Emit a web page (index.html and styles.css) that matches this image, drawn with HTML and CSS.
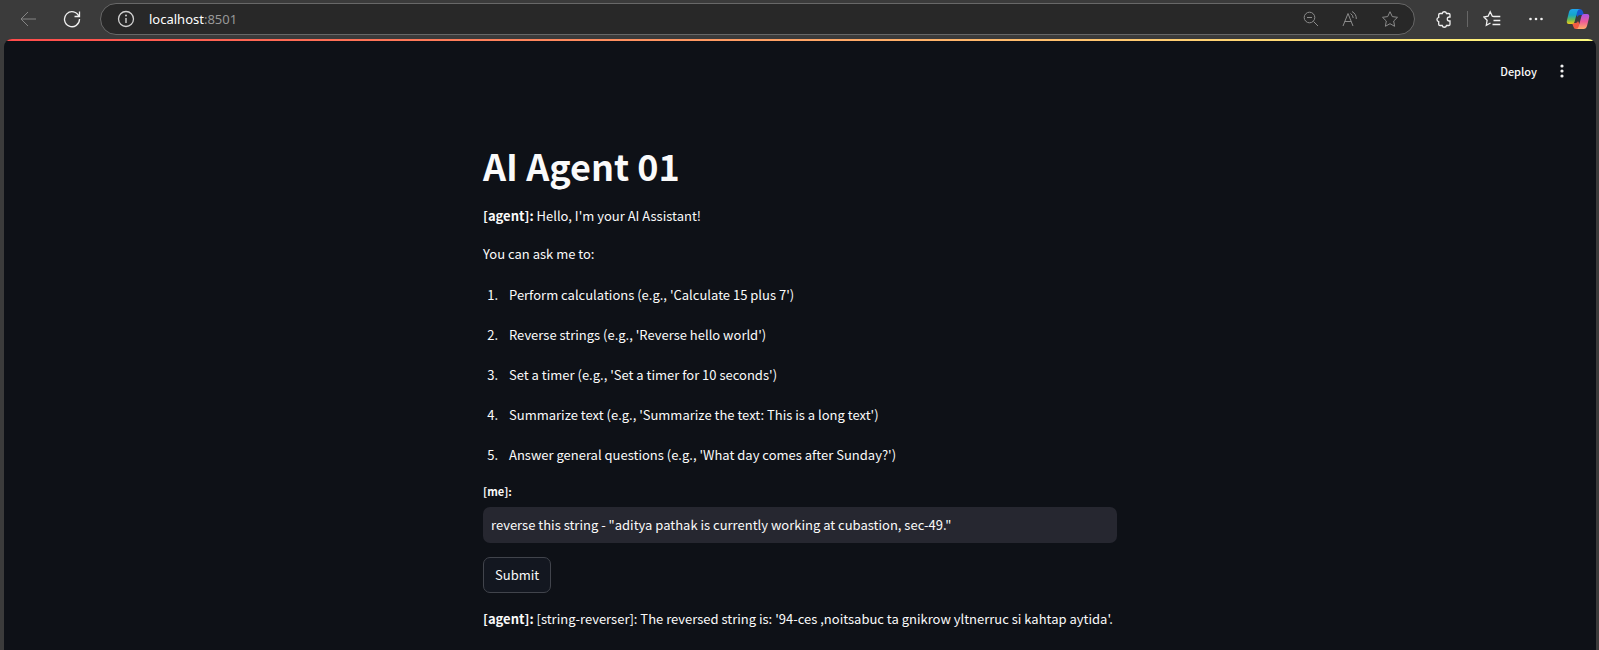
FILE: index.html
```html
<!DOCTYPE html>
<html lang="en">
<head>
<meta charset="utf-8">
<title>AI Agent 01</title>
<link rel="stylesheet" href="styles.css">
</head>
<body>
<header class="toolbar">
  <button class="tool back" aria-label="Back"><svg width="18" height="18" viewBox="0 0 18 18"><path d="M17 9H2M9 2L2 9l7 7"/></svg></button>
  <button class="tool" aria-label="Refresh"><svg width="18" height="18" viewBox="0 0 18 18"><path d="M16 6.500A7.500 7.500 0 1 0 16.500 9M16.500 1.500v5h-5" stroke-width="1.300"/></svg></button>
  <div class="address">
    <button class="tool" aria-label="Site information"><svg width="18" height="18" viewBox="0 0 18 18"><circle cx="9" cy="9" r="7.500" stroke-width="1.300"/><path d="M9 8v5" stroke-width="1.400"/><circle class="dot" cx="9" cy="5.500" r="1"/></svg></button>
    <div class="url">localhost<span class="port">:8501</span></div>
    <div class="address-actions">
      <button class="tool" aria-label="Zoom out"><svg width="16" height="16" viewBox="0 0 16 16"><circle cx="6.500" cy="6.500" r="5.300"/><path d="M10.500 10.500L15 15M4 6.500h5"/></svg></button>
      <button class="tool" aria-label="Read aloud"><svg width="18" height="16" viewBox="0 0 18 16"><path d="M2 15L7 2.500L12 15M3.700 10.500h6.600M9.500 2.500Q12 4 12.200 7M11 .5Q15.500 3 15.300 8"/></svg></button>
      <button class="tool" aria-label="Add to favorites"><svg width="18" height="18" viewBox="0 0 18 18"><path d="M9 1.700l2.300 4.900 5.200.7-3.800 3.700.9 5.300L9 13.700l-4.600 2.600.9-5.300-3.800-3.700 5.200-.7z"/></svg></button>
    </div>
  </div>
  <div class="browser-actions">
    <button class="tool" aria-label="Extensions"><svg width="18" height="18" viewBox="0 0 18 18"><path d="M5 3.500h2.200a2.200 2.200 0 0 1 4.300 0h2.200q1.300 0 1.300 1.300V7h-.7a2 2 0 0 0 0 4h.7v3.200q0 1.300-1.300 1.300h-2.200a2.200 2.200 0 0 1-4.300 0H5q-1.300 0-1.300-1.300v-2.500a2.200 2.200 0 0 1 0-4.300V4.800Q3.700 3.500 5 3.500z" stroke-width="1.300"/></svg></button>
    <span class="divider"></span>
    <button class="tool" aria-label="Favorites"><svg width="18" height="18" viewBox="0 0 18 18"><path d="M11 6.500L9.300 6.200 7.200 1.700 5.100 6.200.9 7l3.200 3.300-.8 5 4.200-2.300M10.500 6.500h6.800M10.500 10.500h6.800M9.500 14.500h7.800" stroke-width="1.300"/></svg></button>
    <button class="tool more" aria-label="Settings and more"><svg width="16" height="16" viewBox="0 0 16 16"><g class="dot"><circle cx="2.500" cy="8" r="1.300"/><circle cx="8" cy="8" r="1.300"/><circle cx="13.500" cy="8" r="1.300"/></g></svg></button>
    <button class="tool" aria-label="Copilot"><svg width="24" height="22" viewBox="0 0 24 22">
      <defs>
        <linearGradient id="cool" x1="0" y1="0" x2="0" y2="1"><stop offset="0" stop-color="#20a5ee"/><stop offset=".4" stop-color="#15a5c9"/><stop offset=".7" stop-color="#65ba58"/><stop offset="1" stop-color="#f3cb16"/></linearGradient>
        <linearGradient id="warm" x1="0" y1="0" x2="0" y2="1"><stop offset="0" stop-color="#a855ed"/><stop offset=".5" stop-color="#ed5b99"/><stop offset="1" stop-color="#ffad68"/></linearGradient>
      </defs>
      <path fill="#1857ce" stroke="none" d="M10 1h4q2.200 0 2.900 2.500L18 7h-4q-2 0-2.500 2L9 5z"/>
      <path fill="#f05c42" stroke="none" d="M6 15h3.500q2 0 2.500-2l2 4-1 4h-3q-2 0-2.700-2.500z"/>
      <path fill="url(#cool)" stroke="none" d="M6.500 1H14q-2 0-2.700 2.500L8.500 14q-.6 2-2.500 2H3q-3 0-2-4l2-8q.8-3 3.500-3z"/>
      <path fill="url(#warm)" stroke="none" d="M17.500 21H10q2 0 2.700-2.500L15.500 8q.6-2 2.500-2h3q3 0 2 4l-2 8q-.8 3-3.500 3z"/>
    </svg></button>
  </div>
</header>
<div class="app">
  <div class="decoration"></div>
  <div class="app-header">
    <button class="deploy">Deploy</button>
    <button class="tool menu" aria-label="Main menu"><svg width="16" height="16" viewBox="0 0 16 16"><g class="dot"><circle cx="8" cy="3" r="1.600"/><circle cx="8" cy="8" r="1.600"/><circle cx="8" cy="13" r="1.600"/></g></svg></button>
  </div>
  <main class="content">
    <h1 class="title">AI Agent 01</h1>
    <p class="message"><strong>[agent]:</strong> Hello, I'm your AI Assistant!</p>
    <p class="message">You can ask me to:</p>
    <ol class="abilities">
      <li>Perform calculations (e.g., 'Calculate 15 plus 7')</li>
      <li>Reverse strings (e.g., 'Reverse hello world')</li>
      <li>Set a timer (e.g., 'Set a timer for 10 seconds')</li>
      <li>Summarize text (e.g., 'Summarize the text: This is a long text')</li>
      <li>Answer general questions (e.g., 'What day comes after Sunday?')</li>
    </ol>
    <form class="prompt">
      <label class="prompt-label" for="me">[me]:</label>
      <input class="prompt-input" id="me" type="text" value='reverse this string - "aditya pathak is currently working at cubastion, sec-49."'>
      <button class="submit" type="button">Submit</button>
    </form>
    <p class="message"><strong>[agent]:</strong> [string-reverser]: The reversed string is: '94-ces ,noitsabuc ta gnikrow yltnerruc si kahtap aytida'.</p>
  </main>
</div>
</body>
</html>
```
FILE: styles.css
```css
* { box-sizing: border-box; }

body {
  margin: 0;
  min-height: 100vh;
  display: flex;
  flex-direction: column;
  background: #3b3b3b;
  color: #fafafa;
  font: 13px/22px "Noto Sans CJK SC", "Noto Sans", sans-serif;
}

button, input { font: inherit; color: inherit; }

.toolbar {
  display: flex;
  align-items: center;
  padding: 3px 9px 4px 19px;
}

.tool {
  display: flex;
  padding: 0;
  border: 0;
  background: none;
  color: #f0f0f0;
}

.tool svg { fill: none; stroke: currentColor; }
.tool .dot { fill: currentColor; stroke: none; }
.tool + .tool { margin-left: 26px; }
.back { color: #858585; }

.address {
  flex: 1;
  display: flex;
  align-items: center;
  height: 32px;
  margin-left: 19px;
  padding: 0 15px 0 16px;
  border: 1px solid #686868;
  border-radius: 16px;
  background: #282828;
}

.address .tool { color: #d0d0d0; }

.url {
  flex: 1;
  margin-left: 14px;
  color: #fff;
  font: 13px/20px "Noto Sans", sans-serif;
}

.port { color: #989898; }

.address-actions { display: flex; align-items: center; }
.address-actions .tool { color: #8c8c8c; }
.address-actions .tool + .tool { margin-left: 22px; }

.browser-actions { display: flex; align-items: center; margin-left: 20px; }
.divider { width: 1px; height: 16px; margin: 0 15px 0 14px; background: #666; }
.browser-actions .more { margin-left: 27px; }
.browser-actions .more + .tool { margin-left: 22px; }

.app {
  flex: 1;
  margin: 0 3px 0 4px;
  border-radius: 8px 8px 0 0;
  overflow: hidden;
  background: #0e1117;
}

.decoration {
  height: 2px;
  background: linear-gradient(90deg, #ff4b4b, #fffd80);
}

.app-header {
  display: flex;
  align-items: center;
  justify-content: flex-end;
  height: 60px;
  padding: 0 26px;
}

.deploy {
  padding: 0;
  border: 0;
  background: none;
  font-size: 11px;
  font-weight: 500;
}

.deploy + .menu { margin-left: 17px; }

.content {
  max-width: 634px;
  margin: 0 auto;
  padding: 38px 0 20px;
}

.title {
  margin: 0 0 14px;
  font-size: 36px;
  line-height: 52px;
  font-weight: 700;
}

.message { margin: 0 0 16px; }

.abilities {
  display: grid;
  gap: 18px;
  margin: 19px 0 0;
  padding: 0 0 0 18px;
}

.abilities li { padding-left: 8px; }

.prompt {
  display: flex;
  flex-direction: column;
  align-items: flex-start;
  margin: 14px 0 15px;
}

.prompt-label {
  margin-bottom: 5px;
  font-size: 11px;
  font-weight: 700;
}

.prompt-input {
  width: 100%;
  height: 36px;
  padding: 0 8px 2px;
  border: 0;
  border-radius: 7px;
  background: #262730;
}

.submit {
  height: 36px;
  margin-top: 14px;
  padding: 0 11px;
  border: 1px solid #41444c;
  border-radius: 7px;
  background: #131720;
}
```
